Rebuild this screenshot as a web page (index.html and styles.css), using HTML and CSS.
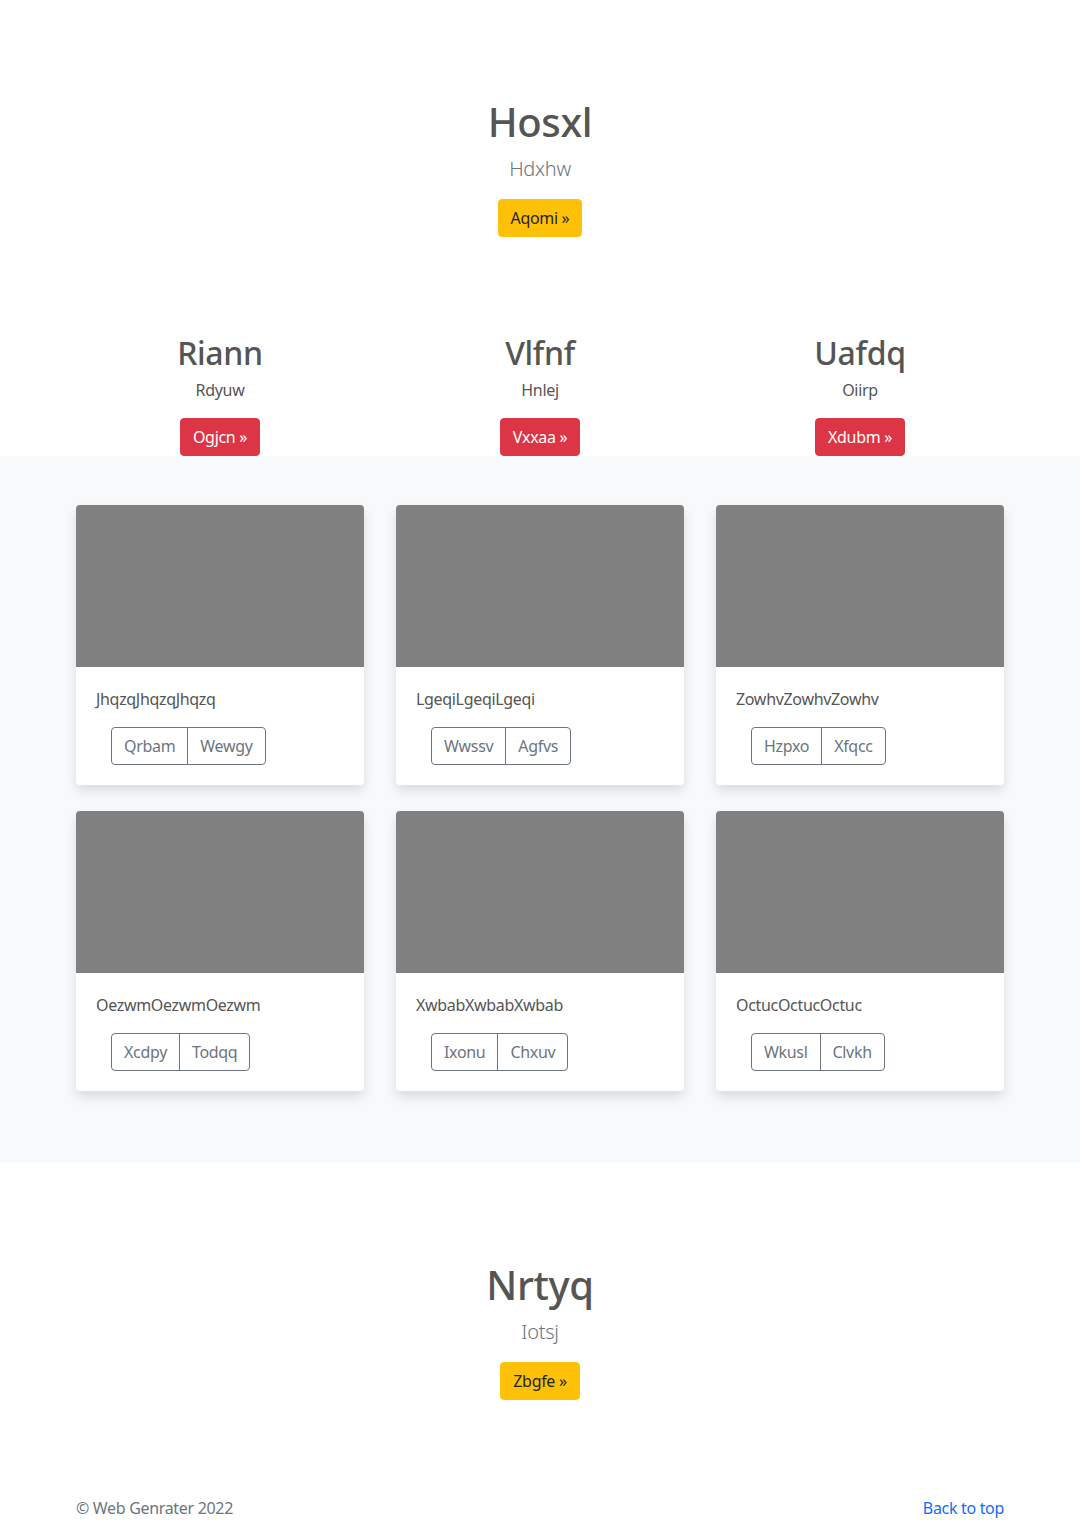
FILE: index.html
```html
<!DOCTYPE html>
<html lang="en">
<head>
<meta charset="utf-8">
<title>Page</title>
<link rel="stylesheet" href="styles.css">
</head>
<body>
<section class="hero">
  <h1 class="hero-title">Hosxl</h1>
  <p class="lead">Hdxhw</p>
  <a class="btn btn-warning" href="#">Aqomi &raquo;</a>
</section>

<section class="features">
  <div class="feature">
    <h2 class="feature-title">Riann</h2>
    <p class="feature-text">Rdyuw</p>
    <a class="btn btn-danger" href="#">Ogjcn &raquo;</a>
  </div>
  <div class="feature">
    <h2 class="feature-title">Vlfnf</h2>
    <p class="feature-text">Hnlej</p>
    <a class="btn btn-danger" href="#">Vxxaa &raquo;</a>
  </div>
  <div class="feature">
    <h2 class="feature-title">Uafdq</h2>
    <p class="feature-text">Oiirp</p>
    <a class="btn btn-danger" href="#">Xdubm &raquo;</a>
  </div>
</section>

<section class="album">
  <div class="grid">
    <div class="card">
      <div class="card-img"></div>
      <div class="card-body">
        <p class="card-text">JhqzqJhqzqJhqzq</p>
        <div class="btn-group"><a class="btn-outline" href="#">Qrbam</a><a class="btn-outline" href="#">Wewgy</a></div>
      </div>
    </div>
    <div class="card">
      <div class="card-img"></div>
      <div class="card-body">
        <p class="card-text">LgeqiLgeqiLgeqi</p>
        <div class="btn-group"><a class="btn-outline" href="#">Wwssv</a><a class="btn-outline" href="#">Agfvs</a></div>
      </div>
    </div>
    <div class="card">
      <div class="card-img"></div>
      <div class="card-body">
        <p class="card-text">ZowhvZowhvZowhv</p>
        <div class="btn-group"><a class="btn-outline" href="#">Hzpxo</a><a class="btn-outline" href="#">Xfqcc</a></div>
      </div>
    </div>
    <div class="card">
      <div class="card-img"></div>
      <div class="card-body">
        <p class="card-text">OezwmOezwmOezwm</p>
        <div class="btn-group"><a class="btn-outline" href="#">Xcdpy</a><a class="btn-outline" href="#">Todqq</a></div>
      </div>
    </div>
    <div class="card">
      <div class="card-img"></div>
      <div class="card-body">
        <p class="card-text">XwbabXwbabXwbab</p>
        <div class="btn-group"><a class="btn-outline" href="#">Ixonu</a><a class="btn-outline" href="#">Chxuv</a></div>
      </div>
    </div>
    <div class="card">
      <div class="card-img"></div>
      <div class="card-body">
        <p class="card-text">OctucOctucOctuc</p>
        <div class="btn-group"><a class="btn-outline" href="#">Wkusl</a><a class="btn-outline" href="#">Clvkh</a></div>
      </div>
    </div>
  </div>
</section>

<section class="hero hero-bottom">
  <h1 class="hero-title">Nrtyq</h1>
  <p class="lead">Iotsj</p>
  <a class="btn btn-warning" href="#">Zbgfe &raquo;</a>
</section>

<footer class="footer">
  <span class="copy">&copy; Web Genrater 2022</span>
  <a class="top-link" href="#">Back to top</a>
</footer>
</body>
</html>
```

FILE: styles.css
```css
* { box-sizing: border-box; }
body {
  margin: 0;
  font-family: "Noto Sans", "Open Sans", sans-serif;
  font-size: 16px;
  line-height: 1.5;
  letter-spacing: -0.02em;
  color: #555;
  background: #fff;
}
a { text-decoration: none; }
p { margin: 0; }

.hero {
  display: flex;
  flex-direction: column;
  align-items: center;
  padding-top: 98px;
}
.hero-title {
  margin: 0 0 8px;
  font-size: 40px;
  font-weight: 500;
  line-height: 48px;
  color: #555;
}
.lead {
  font-size: 20px;
  font-weight: 300;
  line-height: 30px;
  color: #6c757d;
  margin-bottom: 15px;
}
.btn {
  display: inline-block;
  padding: 6px 12px;
  font-size: 16px;
  line-height: 24px;
  border: 1px solid transparent;
  border-radius: 4px;
}
.btn-warning { background: #ffc107; border-color: #ffc107; color: #212529; }
.btn-danger { background: #dc3545; border-color: #dc3545; color: #fff; }

.features {
  display: grid;
  grid-template-columns: repeat(3, 320px);
  justify-content: center;
  padding-top: 97px;
}
.feature {
  display: flex;
  flex-direction: column;
  align-items: center;
}
.feature-title {
  margin: 0 0 6px;
  font-size: 32px;
  font-weight: 500;
  line-height: 38px;
  color: #555;
}
.feature-text {
  margin-bottom: 16px;
  color: #555;
}

.album {
  background: #f8f9fa;
  padding: 49px 0 72px;
}
.grid {
  display: grid;
  grid-template-columns: repeat(3, 288px);
  column-gap: 32px;
  row-gap: 26px;
  justify-content: center;
}
.card {
  background: #fff;
  border-radius: 4px;
  box-shadow: 0 6px 12px rgba(0, 0, 0, 0.12);
  overflow: hidden;
}
.card-img {
  height: 162px;
  background: #808080;
}
.card-body {
  padding: 20px;
}
.card-text {
  color: #555;
  margin-bottom: 16px;
}
.btn-group {
  display: inline-flex;
  margin-left: 15px;
}
.btn-outline {
  display: block;
  padding: 6px 12px;
  line-height: 24px;
  color: #6c757d;
  border: 1px solid #6c757d;
}
.btn-outline:first-child { border-radius: 4px 0 0 4px; }
.btn-outline:last-child { border-radius: 0 4px 4px 0; margin-left: -1px; }

.hero-bottom {
  padding-top: 98px;
}

.footer {
  display: flex;
  justify-content: space-between;
  width: 928px;
  margin: 0 auto;
  padding: 96px 0 0;
  color: #6c757d;
}
.top-link { color: #0d6efd; }
```
